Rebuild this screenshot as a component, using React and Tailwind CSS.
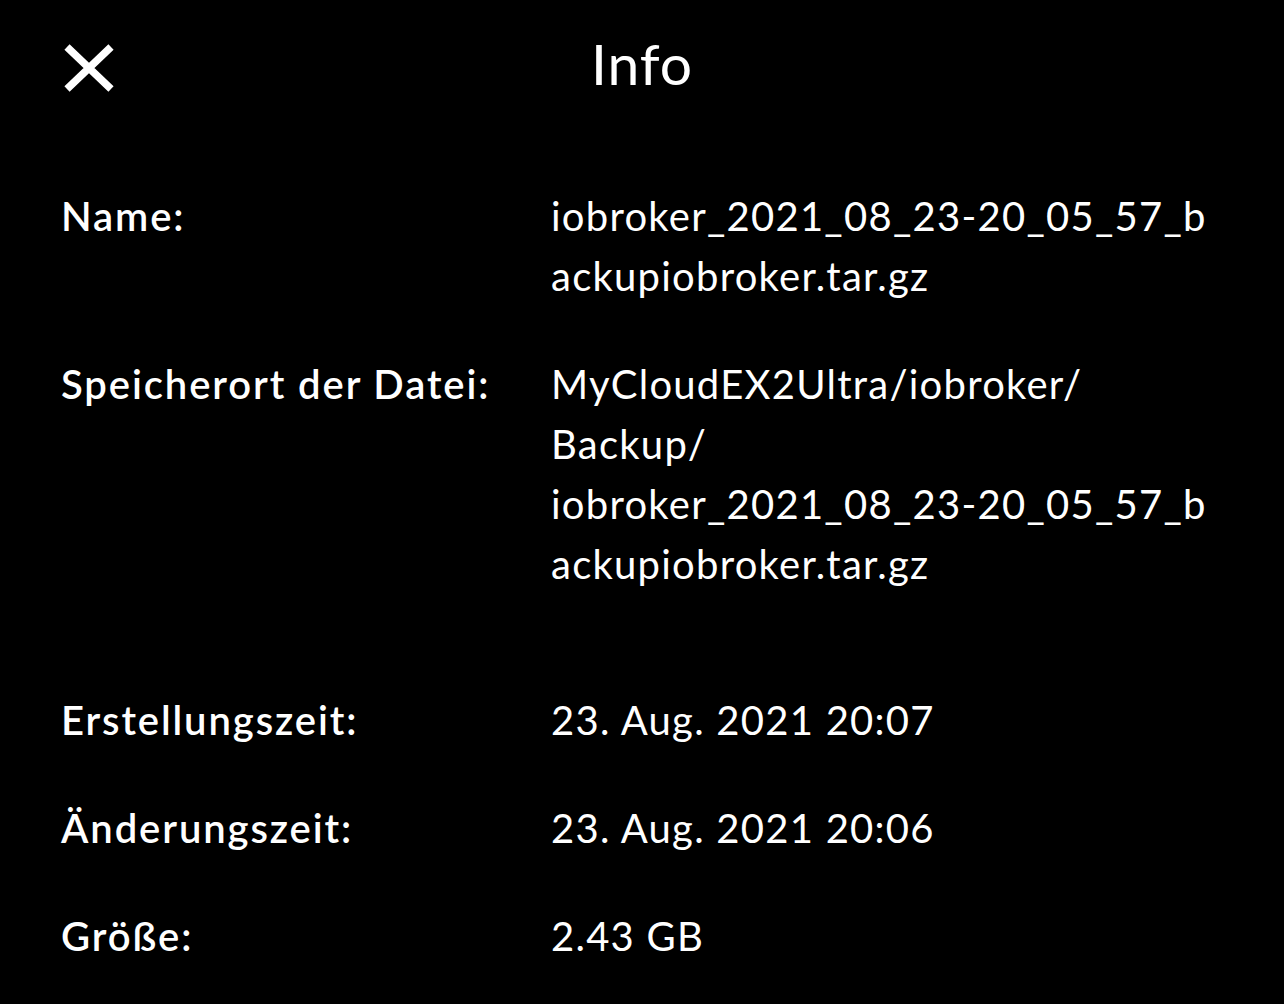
import React from "react";

const rows = [
  { label: "Name:", lines: ["iobroker_2021_08_23-20_05_57_b", "ackupiobroker.tar.gz"] },
  {
    label: "Speicherort der Datei:",
    lines: ["MyCloudEX2Ultra/iobroker/", "Backup/", "iobroker_2021_08_23-20_05_57_b", "ackupiobroker.tar.gz"],
  },
  { label: "Erstellungszeit:", lines: ["23. Aug. 2021 20:07"], spaced: true },
  { label: "Änderungszeit:", lines: ["23. Aug. 2021 20:06"] },
  { label: "Größe:", lines: ["2.43 GB"] },
];

function CloseIcon() {
  return (
    <svg width="52" height="48" viewBox="0 0 52 48" fill="none">
      <path d="M4 3 L48 45 M48 3 L4 45" stroke="white" strokeWidth="7.5" />
    </svg>
  );
}

function InfoRow({ label, lines, spaced }) {
  return (
    <div className={`grid grid-cols-[490px_1fr] ${spaced ? "mt-12" : ""}`}>
      <div className="font-semibold tracking-[1.9px]">{label}</div>
      <div className="font-normal tracking-[1.25px]">
        {lines.map((line, index) => (
          <div key={index}>{line}</div>
        ))}
      </div>
    </div>
  );
}

export default function App() {
  return (
    <div
      className="min-h-[1004px] w-full bg-black text-white"
      style={{ fontFamily: "Lato, 'Noto Sans', sans-serif" }}
    >
      <header className="relative flex h-[126px] items-center justify-center">
        <button className="absolute left-[63px] top-[44px]" type="button">
          <CloseIcon />
        </button>
        <h1 className="text-[57px] font-normal leading-none tracking-[1px]">Info</h1>
      </header>

      <div className="flex flex-col gap-12 pl-[61px] pt-[60px] text-[40px] leading-[60px]">
        {rows.map((row) => (
          <InfoRow key={row.label} {...row} />
        ))}
      </div>
    </div>
  );
}
